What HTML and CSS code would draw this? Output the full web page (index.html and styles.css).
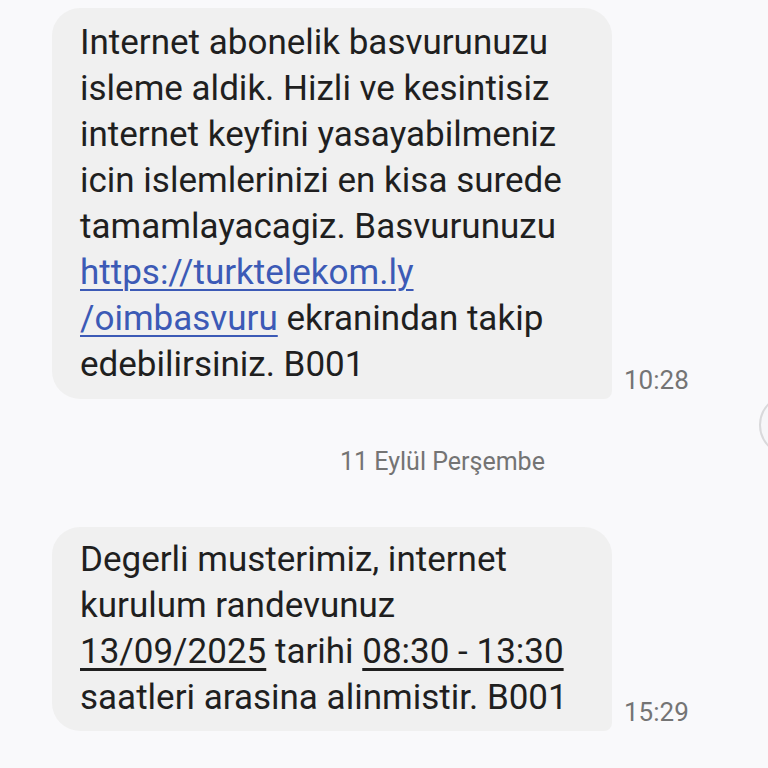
FILE: index.html
```html
<!DOCTYPE html>
<html lang="tr">
<head>
<meta charset="utf-8">
<link rel="stylesheet" href="styles.css">
</head>
<body>
<div class="thread">
  <div class="msg">
    <div class="bubble">Internet abonelik basvurunuzu<br>isleme aldik. Hizli ve kesintisiz<br>internet keyfini yasayabilmeniz<br>icin islemlerinizi en kisa surede<br>tamamlayacagiz. Basvurunuzu<br><a class="link" href="#">https://turktelekom.ly<br>/oimbasvuru</a> ekranindan takip<br>edebilirsiniz. B001</div>
    <div class="time">10:28</div>
  </div>
  <div class="date">11 Eylül Perşembe</div>
  <div class="msg">
    <div class="bubble bubble-short">Degerli musterimiz, internet<br>kurulum randevunuz<br><span class="u">13/09/2025</span> tarihi <span class="u">08:30 - 13:30</span><br>saatleri arasina alinmistir. B001</div>
    <div class="time">15:29</div>
  </div>
  <div class="fab"></div>
</div>
</body>
</html>
```
FILE: styles.css
```css
html, body {
  margin: 0;
  padding: 0;
  background: #f9f9fb;
}
body {
  width: 768px;
  height: 768px;
  overflow: hidden;
  font-family: Roboto, "Noto Sans", sans-serif;
}
.thread {
  position: relative;
  height: 768px;
  padding-top: 8px;
  box-sizing: border-box;
  overflow: hidden;
}
.msg {
  display: flex;
  align-items: flex-end;
  margin-left: 52px;
}
.bubble {
  width: 560px;
  box-sizing: border-box;
  background: #f0f0f0;
  border-radius: 28px 28px 8px 28px;
  padding: 12px 16px 11px 28px;
  font-size: 35px;
  line-height: 46px;
  color: #1f1f1f;
  white-space: nowrap;
}
.bubble-short {
  padding-top: 10px;
  padding-bottom: 10px;
}
.link {
  color: #3c5ab6;
  text-decoration: underline;
  text-decoration-thickness: 2px;
  text-underline-offset: 5px;
}
.u {
  text-decoration: underline;
  text-decoration-thickness: 3px;
  text-underline-offset: 5px;
}
.time {
  margin-left: 12px;
  margin-bottom: 4px;
  font-size: 26px;
  color: #747474;
}
.date {
  margin: 48px 0 51px 340px;
  font-size: 25px;
  line-height: 29px;
  color: #747474;
}
.fab {
  position: absolute;
  left: 759px;
  top: 394px;
  width: 62px;
  height: 62px;
  border-radius: 50%;
  border: 2px solid #d9d9db;
  background: #f6f6f8;
  box-sizing: border-box;
}
```
